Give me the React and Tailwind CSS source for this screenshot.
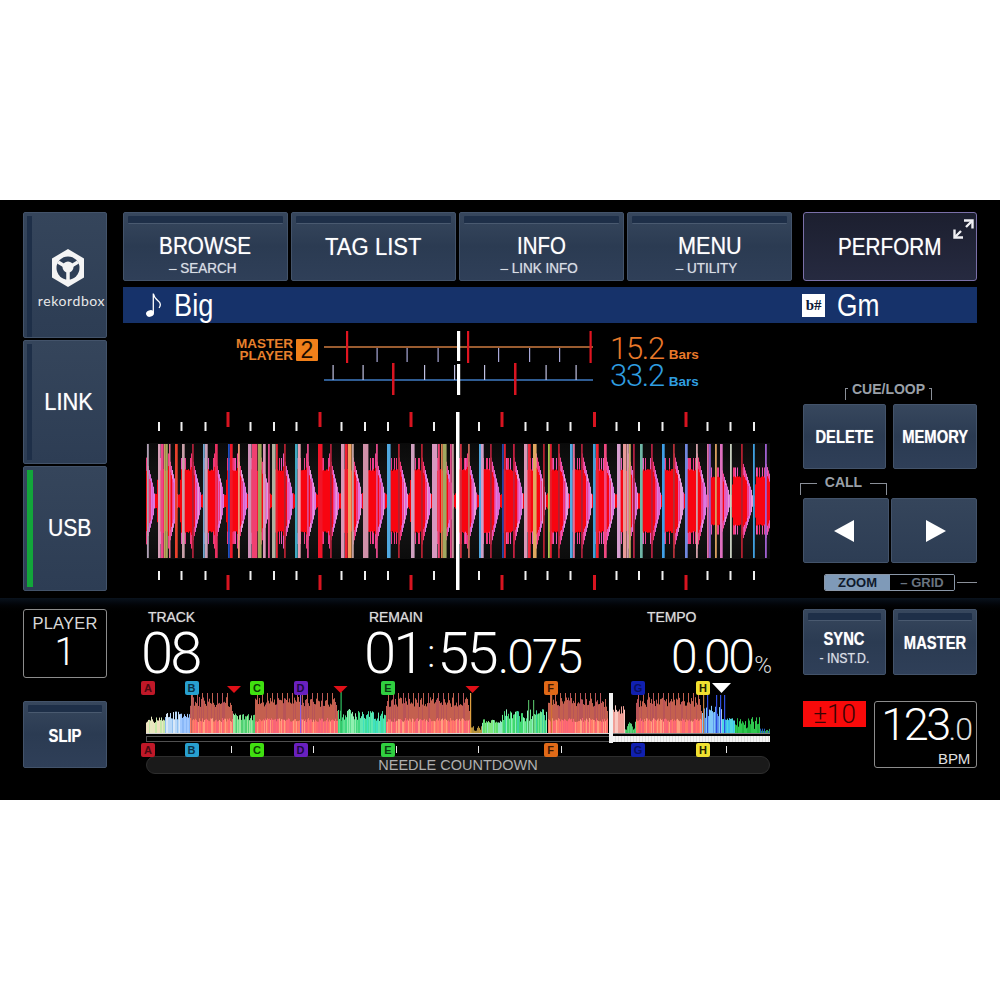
import { Fragment } from 'react'

const SANS = { fontFamily: '"Liberation Sans", Arial, sans-serif' }
const THIN = { fontFamily: 'Roboto, "Liberation Sans", sans-serif', fontWeight: 300 }

function makeRng(seed) {
  let s = seed
  return () => {
    s = (s * 16807) % 2147483647
    return s / 2147483647
  }
}

// tall columns of the zoomed waveform: [x, width, colour]
const SPIKES = [
  [147, 2, '#b0a0b4'], [158, 3, '#d8a0b8'], [161, 3, '#ee4488'], [164, 2, '#c0a858'], [166, 2, '#a8a860'], [169, 1, '#e86a90'],
  [175, 3, '#e8402c'], [182, 3, '#c8a0a8'], [192, 2, '#a82038'], [203, 2, '#70a8d0'], [205, 3, '#c8a0b8'], [215, 3, '#e83060'],
  [228, 2, '#2050c0'], [230, 3, '#f01828'], [238, 2, '#e89878'], [248, 4, '#d090b8'], [252, 6, '#f04070'], [258, 4, '#a0a858'],
  [263, 3, '#d898b8'], [268, 2, '#e04888'], [272, 4, '#b0b0a0'], [276, 2, '#e82030'], [284, 2, '#b02030'], [295, 3, '#40a8c0'],
  [298, 3, '#e8a0b0'], [307, 2, '#e04888'], [318, 5, '#f01428'], [330, 2, '#a82038'], [341, 4, '#d898b8'], [345, 3, '#f02030'],
  [348, 4, '#f0a060'], [352, 2, '#c0a0a0'], [363, 6, '#d090a8'], [376, 2, '#e04888'], [387, 4, '#50a8e0'], [398, 2, '#b02030'],
  [411, 4, '#d0a0c0'], [421, 2, '#b02030'], [432, 6, '#d898c0'], [438, 2, '#f04070'], [441, 2, '#d88050'], [443, 4, '#a0a860'],
  [450, 2, '#e04888'], [452, 2, '#c09898'], [460, 2, '#d03040'], [468, 2, '#c06858'], [479, 3, '#50a8e0'], [481, 3, '#d0a0c8'],
  [490, 2, '#a82038'], [502, 2, '#2048a8'], [504, 2, '#e02030'], [513, 2, '#c02040'], [524, 4, '#d898b8'], [528, 3, '#f02838'],
  [533, 4, '#e0a860'], [543, 2, '#b02030'], [548, 2, '#b0c850'], [550, 2, '#e02030'], [558, 2, '#b02030'], [570, 3, '#50a8e0'],
  [573, 2, '#e07098'], [581, 2, '#a82038'], [593, 3, '#40a0d8'], [596, 3, '#f02030'], [604, 3, '#f04880'], [617, 4, '#d8a0d0'],
  [623, 4, '#e89898'], [627, 2, '#d8a0b0'], [629, 2, '#c8a860'], [633, 2, '#b02040'], [640, 3, '#70b8a8'], [651, 2, '#b02040'],
  [662, 3, '#40a0e8'], [673, 2, '#b03038'], [685, 3, '#7088e0'], [696, 2, '#d0a0a8'], [707, 2, '#e070b0'], [709, 2, '#9060d0'],
  [715, 2, '#d8a060'], [720, 3, '#e070c0'], [730, 2, '#c8d0c0'], [741, 2, '#b02030'], [753, 2, '#40a0e0'], [765, 2, '#a060d0'],
]

const TOP_TICKS = [159, 181.5, 205.5, 250.5, 274, 296.5, 341.5, 365, 388, 434, 479, 525.5, 547.5, 570.5, 616.5, 639, 662.5, 707.5, 730.5, 754]
const RED_TICKS = [228, 320, 411, 502, 594.5, 686]

function Waveform() {
  const rng = makeRng(4711)
  const cols = []
  for (let x = 146; x < 770; x++) {
    const t = (((x - 155) % 23) + 23) % 23 / 23
    const fade = x > 705 ? 0.78 : 1
    // body of a beat: short attack, red block, then a pink tail down to the waist
    let amp = t < 0.05 ? 6 : t < 0.12 ? 20 : t < 0.55 ? 30 : 30 * (1 - t) / 0.45 + 4
    amp = (amp + rng() * 2) * fade
    const pink = ['#ee3f8f', '#e85ab8', '#f03878'][Math.floor(rng() * 3)]
    const orchid = ['#dd78e0', '#e89ad8', '#d868d0'][Math.floor(rng() * 3)]

    // stepped outer layer, taller than the red body
    const mid = t > 0.1 && t < 0.95 ? (t < 0.55 ? 43 : 43 * (1 - t) / 0.45 + 6) * fade : 0
    if (mid && (t > 0.55 || rng() > 0.55)) {
      cols.push(<rect key={'o' + x} x={x} y={501 - mid} width="1" height={mid * 2} fill={t > 0.7 ? orchid : pink} />)
    }
    cols.push(<rect key={x} x={x} y={501 - amp} width="1" height={amp * 2} fill={t < 0.72 ? '#f80410' : t < 0.8 ? pink : orchid} />)
  }
  return (
    <svg width="624" height="182" viewBox="146 410 624 182" className="block">
      <defs>
        <linearGradient id="wbg" x1="0" y1="0" x2="0" y2="1">
          <stop offset="0" stopColor="#0a0a0a" />
          <stop offset="0.5" stopColor="#1a1a1a" />
          <stop offset="1" stopColor="#0c0c0c" />
        </linearGradient>
      </defs>
      <rect x="146" y="443" width="624" height="116" fill="url(#wbg)" />
      {cols}
      {SPIKES.map(([x, w, c]) => (
        <rect key={x + c} x={x} y="444" width={Math.max(1.5, w * 0.9)} height="114" fill={c} />
      ))}
      {TOP_TICKS.map(x => (
        <Fragment key={x}>
          <rect x={x - 1} y="422" width="2" height="9" fill="#f0f0f0" />
          <rect x={x - 1} y="571" width="2" height="9" fill="#f0f0f0" />
        </Fragment>
      ))}
      {RED_TICKS.map(x => (
        <Fragment key={x}>
          <rect x={x - 1.5} y="412" width="3" height="15" fill="#d81420" />
          <rect x={x - 1.5} y="575" width="3" height="15" fill="#d81420" />
        </Fragment>
      ))}
      <rect x="456" y="412" width="3.5" height="178" fill="#ffffff" />
    </svg>
  )
}

function PhaseMeter() {
  return (
    <svg width="270" height="68" viewBox="324 328 270 68" className="block shrink-0">
      <rect x="324" y="346" width="269" height="2" fill="#9a5c30" />
      <rect x="324" y="379" width="269" height="2" fill="#2f5c92" />
      {[376.5, 406.5, 437.5, 498, 529, 559].map(x => (
        <rect key={x} x={x} y="348" width="1.2" height="14" fill="#a8a8d8" />
      ))}
      {[332.5, 362.5, 424, 454, 484, 545.5, 575.5].map(x => (
        <rect key={x} x={x} y="365" width="1.2" height="15" fill="#c0c0e0" />
      ))}
      {[347, 468, 590.5].map(x => (
        <rect key={x} x={x - 1} y="331" width="2.2" height="32" fill="#e01420" />
      ))}
      {[393, 515].map(x => (
        <rect key={x} x={x - 1} y="363" width="2.5" height="32" fill="#d81420" />
      ))}
      <rect x="457" y="331" width="3.2" height="30" fill="#ffffff" />
      <rect x="457" y="364" width="3.2" height="31" fill="#ffffff" />
    </svg>
  )
}

const OV_SEGMENTS = [
  [146, 165, ['#e8e8c0', '#c8e8a8', '#f0e0c0'], 10, 17],
  [165, 180, ['#b8d8f8', '#90c0f0', '#d8e8f8'], 12, 24],
  [180, 190, ['#8ab8f8', '#a0c8ff'], 15, 20],
  [190, 233, null],
  [233, 255, ['#70e090', '#50d070', '#a0e8a0'], 12, 20],
  [255, 338, null],
  [338, 360, ['#60e090', '#90f0b0', '#40d880'], 12, 24],
  [360, 386, ['#40e0a0', '#40e0c0', '#60e8b0'], 12, 22],
  [386, 470, null],
  [470, 482, ['#b09040', '#c09a30'], 2, 7],
  [482, 502, ['#60e070', '#80e880', '#90e8c0'], 10, 14],
  [502, 547, ['#70e890', '#40d870', '#90f0c0', '#40d0a0'], 11, 24],
  [548, 608, null],
  [612, 625, ['#f8c8c0', '#fff0d0', '#f0a098'], 18, 28],
  [625, 636, ['#40c860', '#60d080'], 3, 12],
  [636, 702, null],
  [702, 722, ['#80c8f8', '#c0e0ff', '#6098f0'], 15, 28],
  [722, 735, ['#40c0f0', '#50d8e0'], 12, 16],
  [735, 760, ['#30c850', '#20b840'], 4, 16],
  [760, 770, ['#2060c0', '#30a060'], 1, 5],
]

const OV_LINES = [
  [191, 693, '#c06858'], [300, 690, '#9060e0'], [340.5, 692, '#30c060'], [470, 693, '#e0a040'],
  [551, 693, '#d07030'], [703, 693, '#c08040'], [707, 695, '#3050e0'], [716, 695, '#3050e0'],
  [720, 695, '#3050e0'], [724, 695, '#3050e0'], [528, 700, '#50b060'], [533, 700, '#50b060'],
]

function Overview() {
  const rng = makeRng(9001)
  const bars = []
  OV_SEGMENTS.forEach(([a, b, colors, lo, hi]) => {
    for (let x = a; x < b; x++) {
      if (!colors) {
        const spike = (x - a) % 5 === 2 ? 40 : 26 + rng() * 10
        const h = Math.min(spike, (b - x) * 6 + 16)
        bars.push(<rect key={x} x={x} y={733 - h} width="1" height={h} fill={rng() > 0.3 ? '#c4604f' : '#b85458'} />)
        const low = 11 + rng() * 4
        const c = ['#ff7c68', '#ff6a70', '#ffa080', '#f86478'][Math.floor(rng() * 4)]
        bars.push(<rect key={'l' + x} x={x} y={733 - low} width="1" height={low} fill={c} />)
      } else {
        const h = lo + rng() * (hi - lo)
        const c = colors[Math.floor(rng() * colors.length)]
        bars.push(<rect key={x} x={x} y={733 - h} width="1" height={h} fill={c} />)
      }
    }
  })
  const grid = []
  for (let x = 615; x < 770; x += 3) {
    grid.push(<rect key={x} x={x} y="736" width="0.5" height="6" fill="#c8c8c8" />)
  }
  return (
    <svg width="624" height="65" viewBox="146 680 624 65" className="block">
      {bars}
      {OV_LINES.map(([x, y, c]) => (
        <rect key={x} x={x} y={y} width="1.2" height={733 - y} fill={c} />
      ))}
      <rect x="146" y="733" width="464" height="1" fill="#d0d0d0" />
      <rect x="612" y="733" width="158" height="1" fill="#808080" />
      <rect x="146.5" y="736.5" width="463" height="5" fill="#000" stroke="#505050" />
      <rect x="613" y="736" width="157" height="6" fill="#f4f4f4" />
      {grid}
      <rect x="609" y="693" width="4" height="50" fill="#f0f0f0" />
      {[234, 340.5, 472.5].map(x => (
        <polygon key={x} points={`${x - 7},686 ${x + 7},686 ${x},693`} fill="#e01018" />
      ))}
      <polygon points="712,683 731,683 721.5,693" fill="#ffffff" />
    </svg>
  )
}

const CUES = [
  ['A', 148, 'bg-[#c01828]', 'text-[#4a0810]'],
  ['B', 191.5, 'bg-[#28a0d0]', 'text-[#0a3048]'],
  ['C', 257, 'bg-[#40e010]', 'text-[#0a3a04]'],
  ['D', 300.5, 'bg-[#6a20c0]', 'text-[#1c0840]'],
  ['E', 388, 'bg-[#30d040]', 'text-[#083a10]'],
  ['F', 550.5, 'bg-[#e06a18]', 'text-[#3a1804]'],
  ['G', 638, 'bg-[#1020b0]', 'text-[#081060]'],
  ['H', 703, 'bg-[#f0e030]', 'text-[#222000]'],
]

function CueBox({ cue, top }) {
  const [letter, x, bg, fg] = cue
  return (
    <span
      className={`absolute w-[14px] h-[14px] rounded-[2px] flex items-center justify-center text-[11px] font-bold leading-none ${bg} ${fg}`}
      style={{ left: x - 146 - 7, top }}
    >
      {letter}
    </span>
  )
}

const GLOW = '[text-shadow:0_0_1px_rgba(255,255,255,0.55)]'

function Btn({ label, sub, groove, size = 'text-[23px] scale-x-[0.92]', subSize = 'text-[15px] scale-x-[0.92]', className = '' }) {
  return (
    <div className={`flex flex-col rounded-[2px] border border-[#43536a] bg-linear-to-b from-[#37475d] via-[#2b3b52] to-[#2f3f58] text-white ${className}`}>
      {groove && <div className="mx-[4px] mt-[3px] h-[8px] shrink-0 rounded-[1px] border-b border-[#4a5a70] bg-[#1e2f48]" />}
      <div className="flex flex-1 flex-col items-center justify-center">
        <span className={`${size} ${GLOW} leading-none`}>{label}</span>
        {sub && <span className={`${subSize} ${GLOW} mt-[2px] leading-none text-[#d8dde4]`}>{sub}</span>}
      </div>
    </div>
  )
}

function Bracket({ label, narrow }) {
  return (
    <div className="flex w-[87px] items-start justify-between self-center ml-[-3px]">
      <div className={`border-l border-t border-[#8a8f98] h-[12px] ${narrow ? 'mt-[6px] w-[3px]' : 'mt-[8px] w-[17px]'}`} />
      <span className="text-[14px] font-bold leading-[14px] text-[#9aa0a8]">{label}</span>
      <div className={`border-r border-t border-[#8a8f98] h-[12px] ${narrow ? 'mt-[6px] w-[3px]' : 'mt-[8px] w-[17px]'}`} />
    </div>
  )
}

function RekordboxLogo() {
  return (
    <svg width="32" height="38" viewBox="0 0 32 38">
      <polygon points="16,0 32,9.5 32,28.5 16,38 0,28.5 0,9.5" fill="#f4f4f4" />
      <circle cx="16" cy="19" r="11.5" fill="#2e3e55" />
      <path d="M16 19 L6 13 M16 19 L26 13 M16 19 L16 31" stroke="#f4f4f4" strokeWidth="3.5" />
      <circle cx="16" cy="18" r="5.5" fill="#f4f4f4" />
    </svg>
  )
}

function ExpandIcon() {
  return (
    <svg width="21" height="20" viewBox="0 0 21 20" fill="none" stroke="#f0f0f4" strokeWidth="2.4">
      <path d="M11 1.5h8.5v8" />
      <path d="M1.5 10.5v8h8.5" />
      <path d="M19 2l-6 6M8 12l-6 6" />
    </svg>
  )
}

function NoteIcon() {
  return (
    <svg width="18" height="26" viewBox="0 0 18 26" fill="none">
      <ellipse cx="5" cy="21.5" rx="4" ry="3.2" fill="#ffffff" transform="rotate(-20 5 21.5)" />
      <path d="M8.3 21V1.5c.6 4 2.4 5.4 5 7.5 2.2 1.8 2.6 4.4 .8 7" stroke="#ffffff" strokeWidth="1.3" />
    </svg>
  )
}

const SIDE = 'flex rounded-[2px] border border-[#43536a] bg-linear-to-b from-[#35455b] to-[#2d3d54]'
const SMALL = 'text-[18px] font-bold scale-x-[0.82]'
const LABEL = `text-[14px] leading-none tracking-[-0.1px] text-[#dcdcdc] ${GLOW}`
const SUB_TOP = 'text-[15px] scale-x-[0.9] pr-[6px]'

export default function App() {
  return (
    <div className="min-h-screen bg-white pt-[200px]" style={SANS}>
      <div className="flex h-[600px] flex-col bg-black text-white">
        {/* upper part */}
        <div className="flex h-[398px] shrink-0 gap-[16px] px-[23px] pt-[12px]">
          <div className="flex w-[84px] shrink-0 flex-col gap-[2px]">
            {/* source select */}
            <div className={`${SIDE} h-[126px]`}>
              <div className="ml-[3px] mt-[3px] w-[5px] bg-[#1e2f48]" />
              <div className="flex flex-1 flex-col items-center pt-[36px] whitespace-nowrap">
                <div className="mr-[2px]"><RekordboxLogo /></div>
                <span className="mt-[7px] pl-[5px] text-[14px] leading-none tracking-[0.6px] text-[#e8e8e8]" style={{ fontFamily: 'Lato, sans-serif' }}>rekordbox</span>
              </div>
            </div>
            <div className={`${SIDE} h-[124px]`}>
              <div className="ml-[3px] my-[3px] w-[5px] bg-[#1e2f48]" />
              <div className={`flex flex-1 items-center justify-center text-[23px] ${GLOW}`}><span className="scale-x-[0.95]">LINK</span></div>
            </div>
            <div className={`${SIDE} h-[125px]`}>
              <div className="ml-[3px] my-[3px] w-[6px] bg-[#12a63a]" />
              <div className={`flex flex-1 items-center justify-center text-[23px] ${GLOW}`}><span className="scale-x-[0.92]">USB</span></div>
            </div>
          </div>

          <div className="flex min-w-0 flex-1 flex-col">
            <div className="flex h-[69px] gap-[11px]">
              <div className="flex w-[669px] gap-[3px]">
                <Btn label="BROWSE" sub="– SEARCH" groove size="text-[23px] scale-x-[0.9]" subSize={SUB_TOP} className="w-[165px] [&>div:last-child]:pt-[5px]" />
                <Btn label="TAG LIST" groove size="text-[23px] scale-x-[0.96]" className="w-[165px] pb-[9px]" />
                <Btn label="INFO" sub="– LINK INFO" groove size="text-[23px] scale-x-[0.89]" subSize={SUB_TOP} className="w-[165px] [&>div:last-child]:pt-[5px]" />
                <Btn label="MENU" sub="– UTILITY" groove size="text-[23px] scale-x-[0.94]" subSize={SUB_TOP} className="w-[165px] [&>div:last-child]:pt-[5px]" />
              </div>
              <div className="flex w-[174px] items-start rounded-[3px] border border-[#7a70a8] bg-linear-to-b from-[#1c1f2f] to-[#262a40] pl-[34px] pt-[23px] pr-[3px]">
                <span className={`origin-left scale-x-[0.9] text-[23px] leading-none ${GLOW}`}>PERFORM</span>
                <div className="ml-auto mt-[-17px]"><ExpandIcon /></div>
              </div>
            </div>

            <div className="mt-[6px] flex h-[36px] items-center bg-[#16326a]">
              <div className="ml-[21px] flex w-[19px] justify-center"><NoteIcon /></div>
              <span className="ml-[11px] origin-left scale-x-[0.85] text-[32px] leading-none">Big</span>
              <div className="ml-auto flex h-[23px] w-[23px] items-center justify-center bg-white text-[15px] font-bold leading-none text-[#0c1a38]" style={{ fontFamily: '"Liberation Serif", serif' }}>
                b#
              </div>
              <span className="ml-[12px] mr-[90px] origin-left scale-x-[0.85] text-[31px] leading-none">Gm</span>
            </div>
            <div className="flex flex-1 gap-[11px]">
              <div className="w-[669px] shrink-0">
                <div className="flex items-start pt-[5px]">
                  <div className="mt-[10px] flex w-[173px] items-center justify-end gap-[3px] pr-[1px] shrink-0 ml-[23px]">
                    <div className="flex flex-col items-end text-[13.5px] font-bold leading-[12px] text-[#e8802c]">
                      <span>MASTER</span>
                      <span>PLAYER</span>
                    </div>
                    <div className="flex h-[22px] w-[22px] items-center justify-center rounded-[1px] bg-[#f07f1a] text-[23px] leading-none text-[#1a0c00]">2</div>
                  </div>
                  <div className="ml-[5px] mr-[16px]"><PhaseMeter /></div>
                  <div className="mt-[6px] flex flex-col" style={THIN}>
                    <div className="flex items-baseline text-[#e9792a]">
                      <span className="text-[31px] leading-[30px] tracking-[-1.3px]">15.2</span>
                      <span className="ml-[5px] text-[13.5px] font-bold leading-none" style={SANS}>Bars</span>
                    </div>
                    <div className="mt-[-3px] flex items-baseline text-[#2f9ee0]">
                      <span className="text-[31px] leading-[30px] tracking-[-1.3px]">33.2</span>
                      <span className="ml-[5px] text-[13.5px] font-bold leading-none" style={SANS}>Bars</span>
                    </div>
                  </div>
                </div>
                <div className="ml-[23px] mt-[14px]"><Waveform /></div>
              </div>

              <div className="flex w-[174px] flex-col pt-[59px]">
                <Bracket label="CUE/LOOP" narrow />
                <div className="mt-[4px] flex h-[65px] gap-[7px]">
                  <Btn label="DELETE" size={SMALL} className="w-[83px]" />
                  <Btn label="MEMORY" size={SMALL} className="w-[84px]" />
                </div>
                <div className="mt-[6px]"><Bracket label="CALL" /></div>
                <div className="mt-[3px] flex h-[65px] gap-[2px]">
                  <div className={`${SIDE} w-[86px] items-center justify-center pr-[4px]`}>
                    <svg width="22" height="24" viewBox="0 0 22 24"><polygon points="21,1 21,23 1,12" fill="#fff" /></svg>
                  </div>
                  <div className={`${SIDE} w-[86px] items-center justify-center pl-[4px]`}>
                    <svg width="22" height="24" viewBox="0 0 22 24"><polygon points="1,1 1,23 21,12" fill="#fff" /></svg>
                  </div>
                </div>
                <div className="mt-[11px] flex items-center">
                  <div className="ml-[21px] flex h-[17px] w-[131px] overflow-hidden rounded-[2px] border border-[#8a97a8] text-[13px] font-bold leading-none">
                    <div className="flex w-[65px] items-center justify-center bg-[#7f9ab8] text-[#0f1a2c]">ZOOM</div>
                    <div className="flex flex-1 items-center justify-center bg-black text-[#6a7480]">– GRID</div>
                  </div>
                  <div className="ml-[2px] h-px w-[20px] bg-[#8a8f98]" />
                </div>
              </div>
            </div>
          </div>
        </div>

        {/* lower part */}
        <div className="flex flex-1 gap-[16px] bg-linear-to-b from-[#0a131d] via-black via-[8%] to-black px-[23px] pt-[11px]">
          <div className="flex w-[84px] shrink-0 flex-col">
            <div className="flex h-[69px] flex-col items-center rounded-[3px] border-[1.5px] border-[#8c8c8c] pt-[5px]">
              <span className="text-[16.5px] leading-none tracking-[0.2px] text-[#d8d8d8]">PLAYER</span>
              <span className="mt-[1px] text-[38px] leading-[38px]" style={THIN}>1</span>
            </div>
            <Btn label="SLIP" groove size="text-[18px] font-bold scale-x-[0.82]" className="mt-[23px] h-[67px] pb-[8px]" />
          </div>

          <div className="w-[669px] shrink-0">
            <div className="ml-[23px] flex h-[71px] w-[626px]">
              <div className="w-[220px]">
                <div className={`${LABEL} pl-[2px] pt-[1px]`}>TRACK</div>
                <div className="ml-[-5px] text-[58px] leading-[58px] tracking-[-3px]" style={THIN}>08</div>
              </div>
              <div className="w-[281px]">
                <div className={`${LABEL} pl-[3px] pt-[1px]`}>REMAIN</div>
                <div className="ml-[-2px] flex items-baseline text-[58px] leading-[58px] tracking-[-3px]" style={THIN}>
                  <span>01</span>
                  <span className="relative top-[-6px] mx-[5px] text-[38px]">:</span>
                  <span>55</span>
                  <span className="ml-[2px] text-[48px] tracking-[-2px]">.075</span>
                </div>
              </div>
              <div className="w-[125px]">
                <div className={`${LABEL} pt-[1px]`}>TEMPO</div>
                <div className="mt-[5px] flex items-baseline justify-end leading-[56px]" style={THIN}>
                  <span className="text-[48px] tracking-[-2.5px]">0.00</span>
                  <span className="ml-[2px] text-[24px] leading-none text-[#d8d8d8]">%</span>
                </div>
              </div>
            </div>

            <div className="relative ml-[23px] w-[624px]">
              <Overview />
              {CUES.map(c => <CueBox key={c[0]} cue={c} top={1} />)}
              <div className="relative h-[11px]">
                {CUES.map(c => <CueBox key={c[0]} cue={c} top={-2} />)}
                {[230.5, 312.5, 395.5, 477.5, 560.5, 725.5].map(x => (
                  <span key={x} className="absolute top-[1px] h-[7px] w-[1.5px] bg-[#e8e8e8]" style={{ left: x - 146 }} />
                ))}
              </div>
              <div className="flex h-[18px] items-center justify-center rounded-[9px] border border-[#2e2e2e] bg-[#1a1a1a] text-[14.5px] leading-none text-[#b0b0b0]">
                NEEDLE COUNTDOWN
              </div>
            </div>
          </div>

          <div className="ml-[-5px] flex w-[174px] shrink-0 flex-col">
            <div className="flex h-[66px] gap-[7px]">
              <Btn label="SYNC" sub="- INST.D." groove size={SMALL} subSize="text-[15px] scale-x-[0.82]" className="w-[83px]" />
              <Btn label="MASTER" groove size={SMALL} className="w-[84px] pb-[9px]" />
            </div>
            <div className="mt-[26px] flex items-start gap-[8px]">
              <div className="flex h-[26px] w-[63px] items-center justify-center bg-[#f80a0a] text-[26px] leading-none text-[#3a0404]" style={THIN}>±10</div>
              <div className="flex h-[67px] w-[103px] flex-col items-end rounded-[3px] border border-[#8c8c8c] pr-[4px]">
                <div className="mt-[3px] flex items-baseline leading-[40px]" style={THIN}>
                  <span className="text-[45px] tracking-[-2.5px]">123</span>
                  <span className="text-[32px] tracking-[-1px] text-[#e0e0e0]">.0</span>
                </div>
                <span className="mt-[2px] pr-[2px] text-[15px] leading-none tracking-[-0.2px] text-[#e0e0e0]">BPM</span>
              </div>
            </div>
          </div>
        </div>
      </div>
    </div>
  )
}
